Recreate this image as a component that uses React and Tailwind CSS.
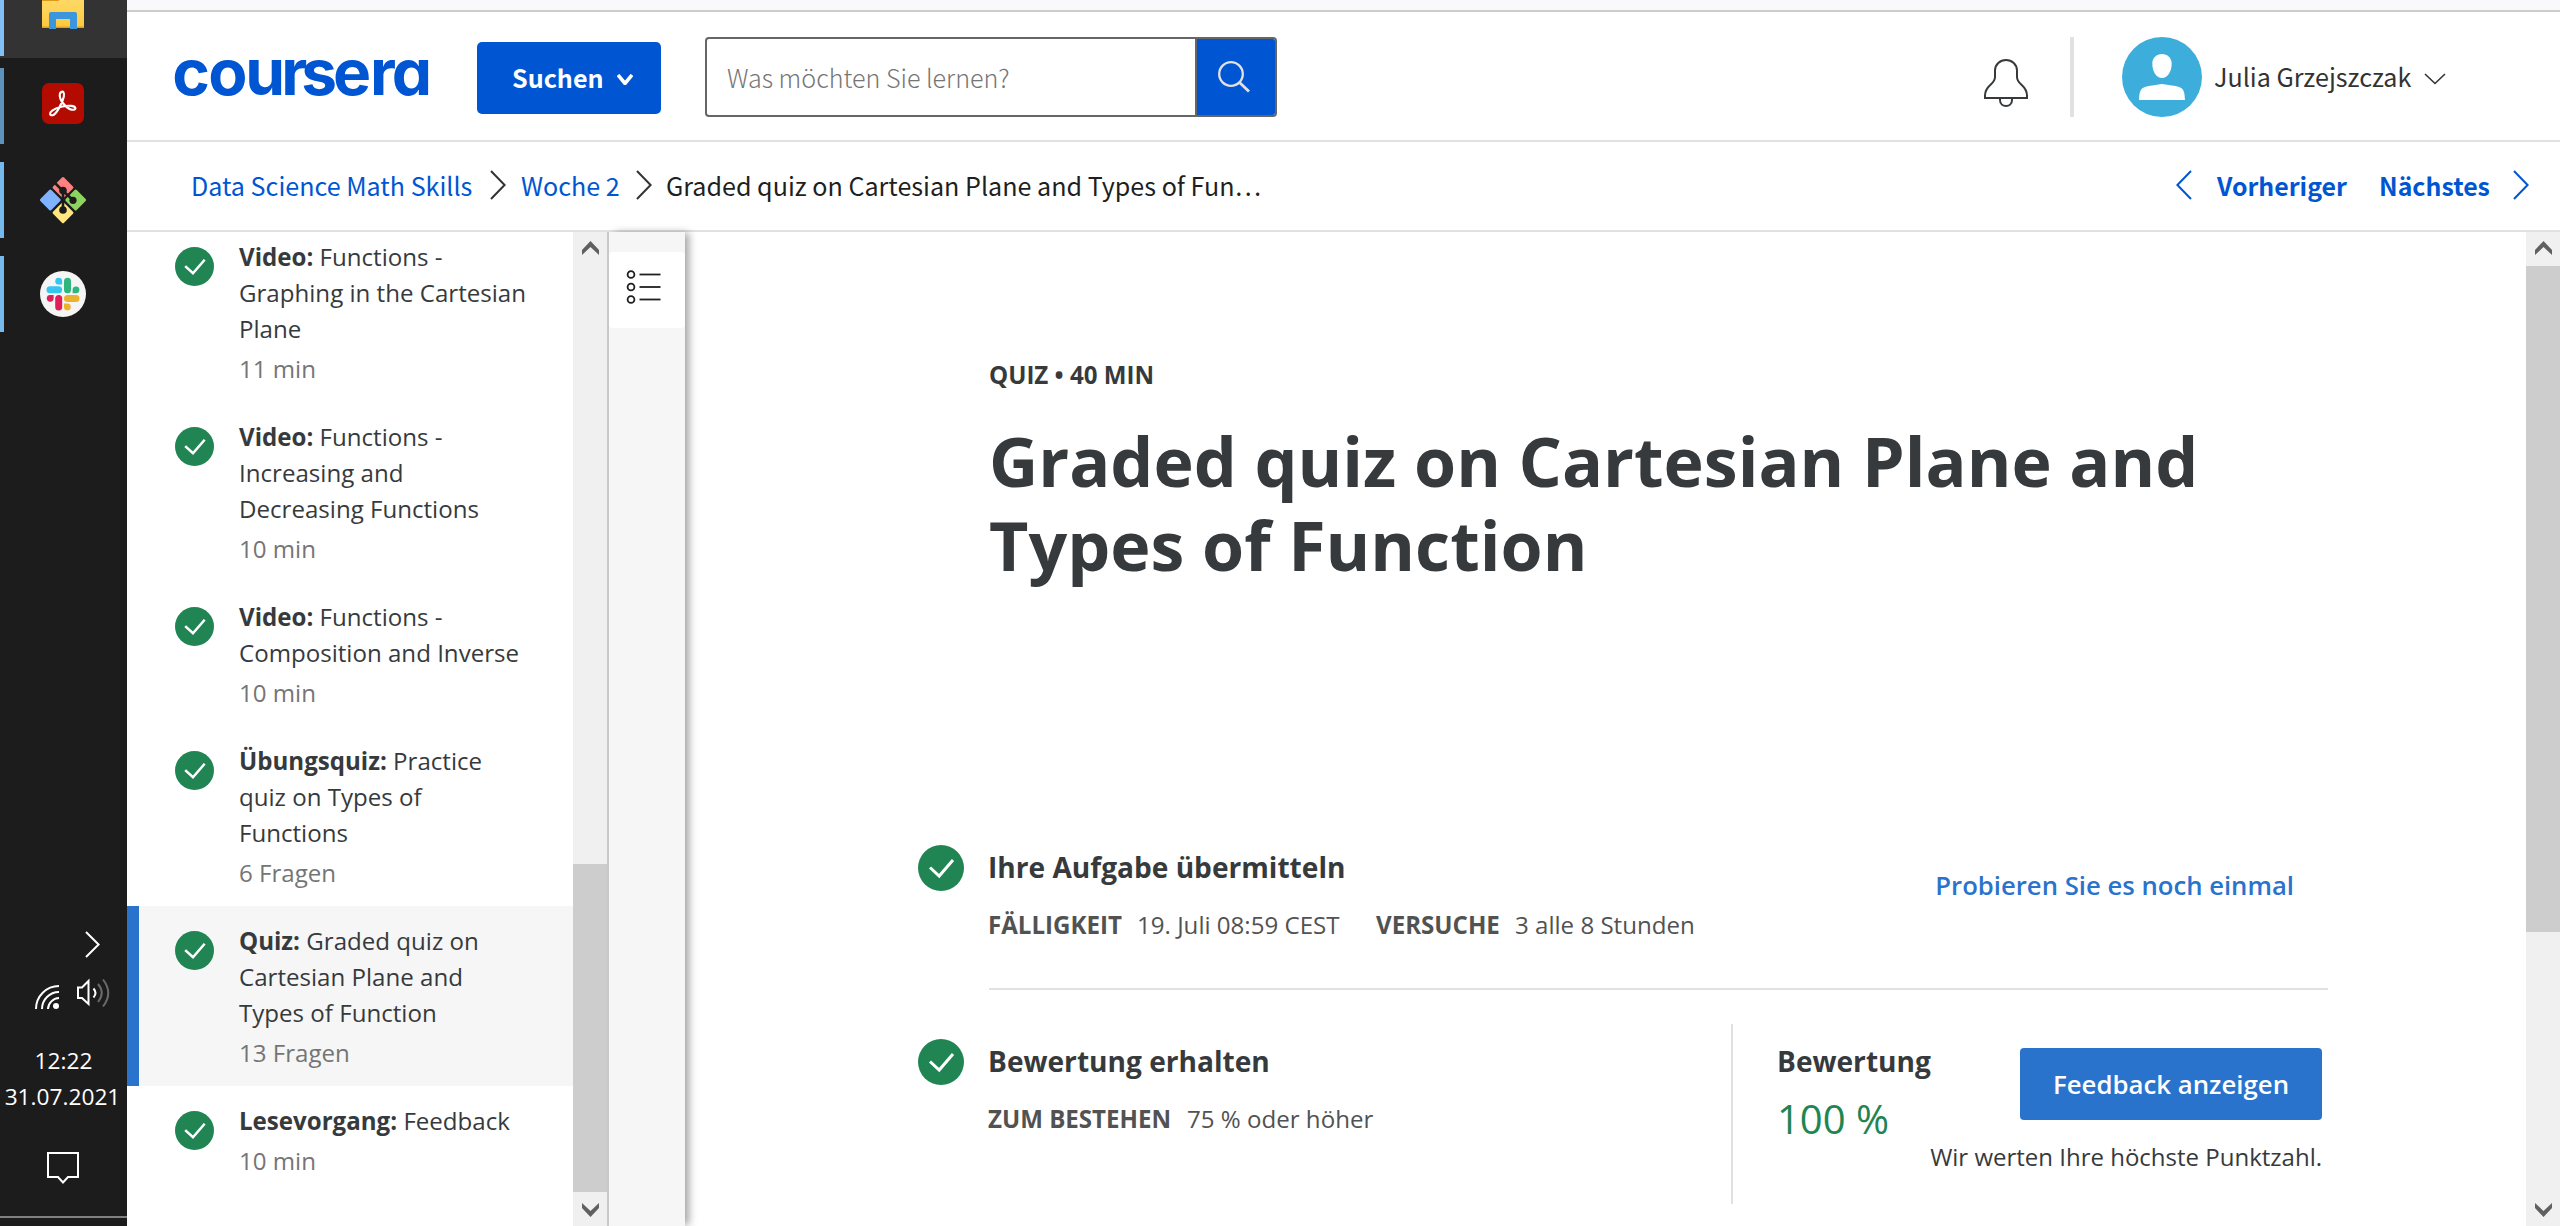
import React from 'react';

const cx = {
  os: "font-['Open_Sans','Noto_Sans',sans-serif]",
  sp: "font-['Noto_Sans_CJK_SC','Open_Sans',sans-serif]",
};

function Check({ className }) {
  return (
    <svg viewBox="0 0 46 46" className={className} aria-hidden="true">
      <circle cx="23" cy="23" r="23" fill="#208553" />
      <path d="M12 22.5 21.2 31 35 15" fill="none" stroke="#fff" strokeWidth="3" />
    </svg>
  );
}

function Chevron({ dir = 'right', w, h, stroke = 2, className = '' }) {
  const p = {
    right: `M1 1 L${w - 1.4} ${h / 2} L1 ${h - 1}`,
    left: `M${w - 1} 1 L1.4 ${h / 2} L${w - 1} ${h - 1}`,
    down: `M1 1 L${w / 2} ${h - 1.5} L${w - 1} 1`,
  }[dir];
  return (
    <svg width={w} height={h} viewBox={`0 0 ${w} ${h}`} className={`shrink-0 ${className}`} aria-hidden="true">
      <path d={p} fill="none" stroke="currentColor" strokeWidth={stroke} />
    </svg>
  );
}

function ScrollArrow({ down }) {
  return (
    <svg width="17" height="14" viewBox="0 0 17 14" className={down ? 'rotate-180' : ''} aria-hidden="true">
      <path d="M8.5 0 17 9v5L8.5 6 0 14V9z" fill="#606060" />
    </svg>
  );
}

function FolderIcon() {
  return (
    <svg width="42" height="29" viewBox="0 0 42 29" aria-hidden="true">
      <defs>
        <linearGradient id="folder" x1="0" y1="0" x2="0" y2="1">
          <stop offset="0" stopColor="#ffdb6e" />
          <stop offset="1" stopColor="#fcc93e" />
        </linearGradient>
      </defs>
      <rect x="0" y="-6" width="42" height="34" rx="1" fill="url(#folder)" />
      <path d="M0 0h18l-2 1H0z" fill="#dd9a12" />
      <path d="M0 26.6h42v.4a1 1 0 0 1-1 1H1a1 1 0 0 1-1-1z" fill="#e0a21b" />
      <path d="M7 29V14a2 2 0 0 1 2-2h24a2 2 0 0 1 2 2v15h-7V19H14v10z" fill="#3b96dd" />
    </svg>
  );
}

function AcrobatIcon() {
  return (
    <svg width="42" height="41" viewBox="0 0 42 41" aria-hidden="true">
      <rect width="42" height="41" rx="7" fill="#b30b00" />
      <path
        d="M19.2 9c2-1.4 3.4 1 2.6 4.8C20.600 19.500 14.400 31.500 10.600 32.200c-3 .5-3.600-2.200-.4-4.600 4.700-3.600 13.400-5.200 19-4.700 4.800.4 5.400 3.400 2.400 3.800-4.600.6-12.200-6.100-13.600-12.200-.6-2.700-.2-4.600 1.200-5.500z"
        fill="none"
        stroke="#fff"
        strokeWidth="2.100"
      />
    </svg>
  );
}

function GitIcon() {
  return (
    <svg width="48" height="48" viewBox="0 0 48 48" aria-hidden="true">
      <g>
        <rect x="-7.800" y="-7.800" width="15.600" height="15.600" rx="1.500" transform="translate(24 11.500) rotate(45)" fill="#ff8080" />
        <rect x="-7.800" y="-7.800" width="15.600" height="15.600" rx="1.500" transform="translate(11.300 24) rotate(45)" fill="#80b3ff" />
        <rect x="-7.800" y="-7.800" width="15.600" height="15.600" rx="1.500" transform="translate(36.700 24) rotate(45)" fill="#8cd35f" />
        <rect x="-7.800" y="-7.800" width="15.600" height="15.600" rx="1.500" transform="translate(24 36.700) rotate(45)" fill="#ffe680" />
      </g>
      <g stroke="#1c1c1c" strokeWidth="2.600" fill="none">
        <path d="M15.500 6.500 24 15v19M24 15l10 9" />
      </g>
      <g fill="#1c1c1c">
        <circle cx="24" cy="14.500" r="3.800" />
        <circle cx="34" cy="24.300" r="3.600" />
        <circle cx="24" cy="34" r="3.800" />
      </g>
    </svg>
  );
}

function SlackIcon() {
  return (
    <svg width="46" height="46" viewBox="0 0 46 46" aria-hidden="true">
      <circle cx="23" cy="23" r="23" fill="#f5f5f5" />
      <g fill="#36c5f0">
        <rect x="6.500" y="15.200" width="15.600" height="7" rx="3.500" />
        <path d="M22.100 13.600h-3.400a3.400 3.400 0 1 1 3.400-3.400z" />
      </g>
      <g fill="#2eb67d">
        <rect x="24" y="6.700" width="7" height="15.500" rx="3.500" />
        <path d="M32.600 22.200v-3.400a3.400 3.400 0 1 1 3.400 3.400z" />
      </g>
      <g fill="#ecb22e">
        <rect x="24" y="23.900" width="15.500" height="7" rx="3.500" />
        <path d="M24 32.500h3.400a3.400 3.400 0 1 1-3.400 3.400z" />
      </g>
      <g fill="#e01e5a">
        <rect x="15.200" y="23.900" width="7" height="15.500" rx="3.500" />
        <path d="M13.600 23.900v3.400a3.400 3.400 0 1 1-3.400-3.400z" />
      </g>
    </svg>
  );
}

function TaskbarApp({ bar, children }) {
  return (
    <div className="flex h-[76px] items-center">
      <div className={`h-full w-1 ${bar}`} />
      <div className="flex flex-1 justify-center pr-[5px]">{children}</div>
    </div>
  );
}

function Taskbar() {
  return (
    <aside className={`flex h-full w-[127px] shrink-0 flex-col bg-[#1c1c1c] text-white ${cx.os}`}>
      <div className="flex h-[58px] bg-[#333333]">
        <div className="h-14 w-1 bg-[#80c0f6]" />
        <div className="flex flex-1 justify-center pr-[5px]">
          <FolderIcon />
        </div>
      </div>
      <div className="mt-[10px] flex flex-col gap-[18px]">
        <TaskbarApp bar="bg-[#5d92bd]">
          <div className="-mt-[5px]"><AcrobatIcon /></div>
        </TaskbarApp>
        <TaskbarApp bar="bg-[#76b9ed]"><GitIcon /></TaskbarApp>
        <TaskbarApp bar="bg-[#76b9ed]"><SlackIcon /></TaskbarApp>
      </div>
      <div className="mt-auto flex justify-end pr-[27px]">
        <Chevron w={15} h={27} stroke={2} />
      </div>
      <div className="mt-5 flex items-end gap-[17px] pl-[34px]">
        <svg width="26" height="28" viewBox="0 0 26 28" fill="none" stroke="#fff" strokeWidth="2" aria-hidden="true">
          <path d="M2 28A23 23 0 0 1 25 5M8 28A17 17 0 0 1 25 11M14 28A11.500 11.500 0 0 1 25 17" />
          <circle cx="22" cy="25" r="3" fill="#fff" stroke="none" />
        </svg>
        <svg width="33" height="30" viewBox="0 0 33 30" fill="none" stroke="#fff" strokeWidth="2" className="mb-px" aria-hidden="true">
          <path d="M1 9.500h4L11.500 3v23L5 20H1z" />
          <path d="M16.500 10.500q4 4.500 0 9" />
          <path d="M21 6q7.500 8.500 0 18M26 1.500q10.500 13.500 0 27" stroke="#6a6a6a" />
        </svg>
      </div>
      <div className="mt-[34px] text-center text-[22.700px] leading-9">
        <div>12:22</div>
        <div className="-ml-[2px] whitespace-nowrap">31.07.2021</div>
      </div>
      <div className="mt-[37px] flex h-[64px] justify-center pr-[1px]">
        <svg width="32" height="32" viewBox="0 0 32 32" fill="none" stroke="#fff" strokeWidth="2" aria-hidden="true">
          <path d="M1 1h30v24H21l-5 5.500L11 25H1z" />
        </svg>
      </div>
      <div className="h-[2px] bg-[#808080]" />
      <div className="h-2 shrink-0" />
    </aside>
  );
}

function Header() {
  return (
    <header className={`flex h-[130px] shrink-0 border-b-2 border-[#e1e1e1] ${cx.sp}`}>
      <svg width="270" height="80" viewBox="0 0 270 80" className="ml-[42px] mt-[30px] shrink-0 overflow-visible" role="img" aria-label="coursera">
        <text
          x="3.300 39.300 76.300 112.300 132.300 164 201 222.700"
          y="52.500"
          fill="#0056d2"
          className="font-['Inter',sans-serif] text-[64px] font-bold [font-feature-settings:'cv11']"
        >
          coursera
        </text>
      </svg>
      <button className="ml-[38px] mt-[30px] flex h-[72px] w-[184px] items-center rounded-[5px] bg-[#0056d2] pb-[2px] pl-[35px] text-white">
        <span className="w-[92px] text-left text-[25.100px] font-bold leading-9">Suchen</span>
        <Chevron dir="down" w={16} h={11} stroke={3.6} className="ml-[13px] mt-1" />
      </button>
      <div className="ml-11 mt-[25px] flex h-20 w-[572px] rounded-[4px] border-2 border-[#666666]">
        <div className="flex flex-1 items-center border-r-2 border-[#666666] pb-px pl-5 text-[25.100px] font-light leading-9 text-[#757575]">
          Was möchten Sie lernen?
        </div>
        <div className="flex w-[78px] items-center justify-center rounded-r-[2px] bg-[#0056d2]">
          <svg width="32" height="32" viewBox="0 0 32 32" fill="none" stroke="#e1e1e1" strokeWidth="2.300" className="-mt-[1px] mr-[5px]" aria-hidden="true">
            <circle cx="13" cy="13" r="11.800" />
            <path d="m21.500 21.500 9.500 9" strokeWidth="2.800" />
          </svg>
        </div>
      </div>
      <svg width="44" height="48" viewBox="0 0 44 48" fill="none" stroke="#373a3c" strokeWidth="2" className="ml-[707px] mt-[47px] shrink-0" aria-hidden="true">
        <path d="M11 11.500C11 5.500 16 1 22 1s11 4.500 11 10.500v6.500c0 8 10 8 10 18.500v2.500H1v-2.500C1 26 11 26 11 18z" />
        <path d="M16 39v2c0 8 12 8 12 0v-2" />
      </svg>
      <div className="ml-[42px] mt-[25px] h-20 w-1 bg-[#e1e1e1]" />
      <svg width="80" height="80" viewBox="0 0 80 80" className="ml-12 mt-[25px] shrink-0" aria-hidden="true">
        <circle cx="40" cy="40" r="40" fill="#3daedc" />
        <path d="M40 17c5.500 0 9.700 4 9.700 9.500C49.700 34 46 41 40 41s-9.700-7-9.700-14.500C30.300 21 34.500 17 40 17zM40 47c7 1 13 1.700 17 3 5 1.700 5.500 5 6 13H17c.5-8 1-11.300 6-13 4-1.300 10-2 17-3z" fill="#fff" />
      </svg>
      <div className="ml-3 mt-[46px] w-[198px] whitespace-nowrap text-[25.100px] leading-9 text-[#333]">Julia Grzejszczak</div>
      <Chevron dir="down" w={22} h={12} stroke={1.6} className="ml-[12px] mt-[61px] text-[#333]" />
    </header>
  );
}

function Breadcrumbs() {
  return (
    <nav className={`flex h-[90px] shrink-0 items-center border-b-2 border-[#e1e1e1] pb-[2px] pl-16 text-[25.100px] leading-9 text-[#0056d2] ${cx.sp}`}>
      <a className="w-[281px] whitespace-nowrap">Data Science Math Skills</a>
      <Chevron w={16} h={30} className="ml-[18px] text-[#333]" />
      <a className="ml-[15px] w-[99px] whitespace-nowrap">Woche 2</a>
      <Chevron w={16} h={30} className="ml-4 text-[#333]" />
      <span className="ml-[14px] w-[600px] whitespace-nowrap text-[#1f1f1f]">Graded quiz on Cartesian Plane and Types of Fun…</span>
      <Chevron dir="left" w={16} h={30} className="ml-auto" />
      <a className="ml-[25px] w-[131px] whitespace-nowrap text-[24.900px] font-bold">Vorheriger</a>
      <a className="ml-[31px] w-[112px] whitespace-nowrap text-[24.900px] font-bold">Nächstes</a>
      <Chevron w={16} h={30} className="ml-[22px] mr-[31px]" />
    </nav>
  );
}

const ITEMS = [
  { kind: 'Video:', lines: ['Functions -', 'Graphing in the Cartesian', 'Plane'], meta: '11 min' },
  { kind: 'Video:', lines: ['Functions -', 'Increasing and', 'Decreasing Functions'], meta: '10 min' },
  { kind: 'Video:', lines: ['Functions -', 'Composition and Inverse'], meta: '10 min' },
  { kind: 'Übungsquiz:', lines: ['Practice', 'quiz on Types of', 'Functions'], meta: '6 Fragen' },
  { kind: 'Quiz:', lines: ['Graded quiz on', 'Cartesian Plane and', 'Types of Function'], meta: '13 Fragen', active: true },
  { kind: 'Lesevorgang:', lines: ['Feedback'], meta: '10 min' },
];

function LessonItem({ kind, lines, meta, active }) {
  return (
    <li className={`flex border-l-[12px] pb-[15px] pl-9 pt-[17px] ${active ? 'border-[#2a73cc] bg-[#f6f6f6]' : 'border-transparent'}`}>
      <Check className="mt-[8px] h-[39px] w-[39px] shrink-0" />
      <div className="ml-[25px] whitespace-nowrap text-[24.100px] leading-9 text-[#373a3c]">
        {lines.map((line, i) => (
          <div key={line}>
            {i === 0 && <span className="font-bold">{kind} </span>}
            {line}
          </div>
        ))}
        <div className="mt-1 text-[#757575]">{meta}</div>
      </div>
    </li>
  );
}

function Sidebar() {
  return (
    <div className={`flex w-[482px] shrink-0 border-r-2 border-[#cccccc] ${cx.os}`}>
      <div className="w-[446px] overflow-hidden">
        <ul className="-mt-[10px]">
          {ITEMS.map((item, i) => (
            <LessonItem key={i} {...item} />
          ))}
        </ul>
      </div>
      <div className="flex w-[34px] flex-col items-center bg-[#f0f0f0] pb-[9px] pt-[9px]">
        <ScrollArrow />
        <div className="mt-[609px] h-[328px] w-full bg-[#cdcdcd]" />
        <div className="mt-auto"><ScrollArrow down /></div>
      </div>
    </div>
  );
}

function ToolRail() {
  return (
    <div className="relative z-10 w-[76px] shrink-0 bg-[#f6f6f6] pt-5 shadow-[5px_0_8px_-1px_rgba(0,0,0,0.36)]">
      <div className="flex h-[76px] items-center rounded-[4px] bg-white pb-[7px] pl-[17px]">
        <svg width="36" height="34" viewBox="0 0 36 34" fill="none" stroke="#1f1f1f" strokeWidth="1.800" aria-hidden="true">
          {[4.5, 17, 29.5].map((y) => (
            <g key={y}>
              <circle cx="5" cy={y} r="3.400" />
              <path d={`M13.500 ${y}H34.500`} />
            </g>
          ))}
        </svg>
      </div>
    </div>
  );
}

function Main() {
  return (
    <main className={`flex min-w-0 flex-1 flex-col bg-white pl-[233px] text-[#373a3c] ${cx.os}`}>
      <div className="ml-[71px] mt-[125px] text-[24.100px] font-bold leading-9">QUIZ • 40 MIN</div>
      <h1 className="ml-[71px] mt-[26px] w-[1340px] text-[68.100px] font-bold leading-[84px]">
        <div>Graded quiz on Cartesian Plane and</div>
        <div>Types of Function</div>
      </h1>

      <section className="mt-[258px] flex h-[145px] w-[1410px]">
        <Check className="h-[46px] w-[46px] shrink-0" />
        <div className="ml-[25px] flex flex-1 justify-between border-b-2 border-[#e1e1e1]">
          <div className="-ml-px mt-[3px]">
            <h2 className="text-[28.100px] font-bold leading-[38px]">Ihre Aufgabe übermitteln</h2>
            <div className="mt-[21px] flex whitespace-nowrap text-[24.100px] leading-9 text-[#525252]">
              <span className="w-[149px] font-bold">FÄLLIGKEIT</span>
              <span className="w-[239px]">19. Juli 08:59 CEST</span>
              <span className="w-[139px] font-bold">VERSUCHE</span>
              <span>3 alle 8 Stunden</span>
            </div>
          </div>
          <a className="mr-[34px] mt-[23px] whitespace-nowrap text-[25.700px] font-semibold leading-9 text-[#2a73cc]">
            Probieren Sie es noch einmal
          </a>
        </div>
      </section>

      <section className="mt-[34px] flex h-[180px] w-[1410px]">
        <Check className="mt-[15px] h-[46px] w-[46px] shrink-0" />
        <div className="-ml-px mt-[18px] flex-1 pl-[25px]">
          <h2 className="text-[28.100px] font-bold leading-[38px]">Bewertung erhalten</h2>
          <div className="mt-[21px] flex whitespace-nowrap text-[24.100px] leading-9 text-[#525252]">
            <span className="w-[199px] font-bold">ZUM BESTEHEN</span>
            <span>75 % oder höher</span>
          </div>
        </div>
        <div className="flex w-[597px] shrink-0 border-l-2 border-[#e1e1e1] pl-[44px]">
          <div className="mt-[18px] w-[153px] whitespace-nowrap">
            <div className="text-[28.100px] font-bold leading-[38px]">Bewertung</div>
            <div className="mt-[11px] text-[40px] leading-[56px] text-[#208553]">100 %</div>
          </div>
          <div className="flex w-[392px] flex-col items-end pt-6">
            <button className="h-[72px] w-[302px] rounded-[4px] bg-[#2a73cc] text-center text-[25.800px] font-semibold leading-[72px] text-white">
              Feedback anzeigen
            </button>
            <div className="mt-[19px] whitespace-nowrap text-[24px] leading-9">Wir werten Ihre höchste Punktzahl.</div>
          </div>
        </div>
      </section>
    </main>
  );
}

export default function App() {
  return (
    <div className="flex h-[1226px] w-[2560px] overflow-hidden bg-white">
      <Taskbar />
      <div className="flex min-w-0 flex-1 flex-col">
        <div className="h-3 shrink-0 border-b-2 border-[#cccccc] bg-[#f9f9fb]" />
        <Header />
        <Breadcrumbs />
        <div className="flex min-h-0 flex-1">
          <Sidebar />
          <ToolRail />
          <Main />
          <div className="flex w-[34px] shrink-0 flex-col items-center bg-[#f0f0f0] pb-[9px] pt-[9px]">
            <ScrollArrow />
            <div className="mt-[11px] h-[666px] w-full bg-[#cdcdcd]" />
            <div className="mt-auto"><ScrollArrow down /></div>
          </div>
        </div>
      </div>
    </div>
  );
}
